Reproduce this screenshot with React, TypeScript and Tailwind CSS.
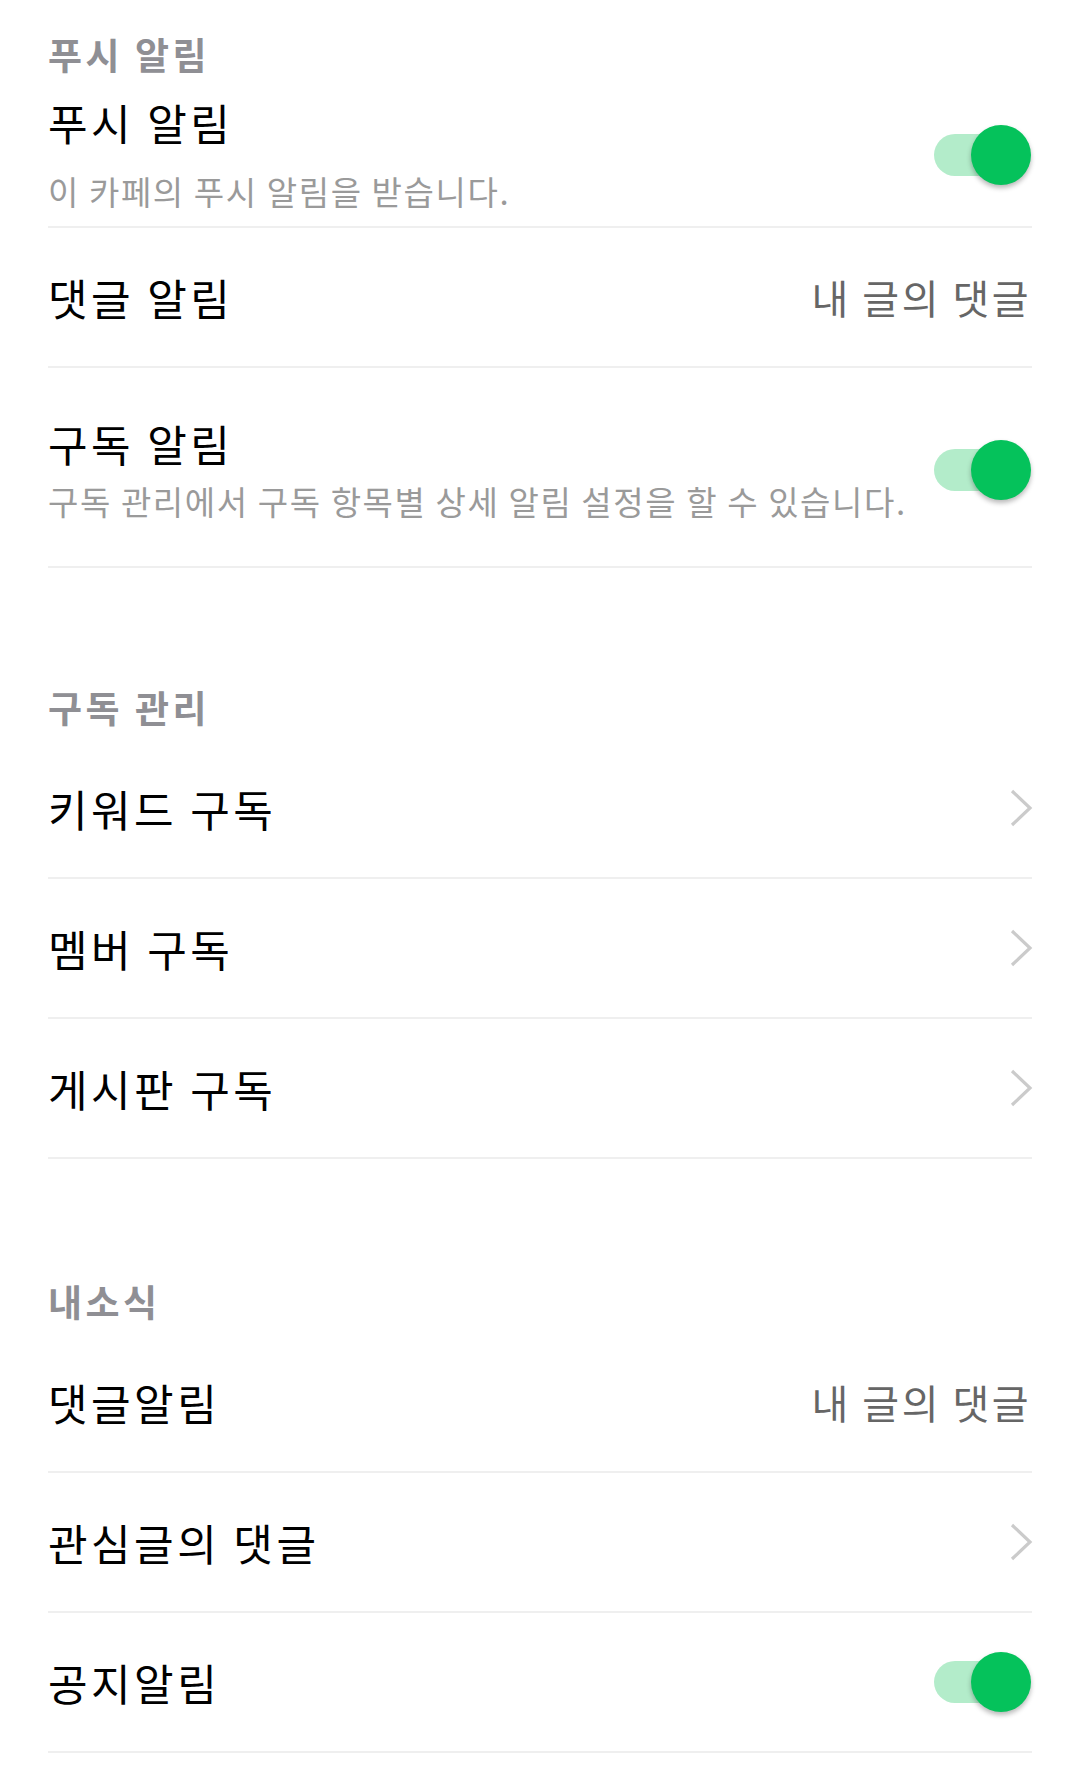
import React from "react";

const font = "font-['Noto_Sans_CJK_KR','Noto_Sans',sans-serif]";

const Toggle = () => (
	<div className="relative h-[60px] w-[98px] shrink-0">
		<div className="absolute left-0 right-[4px] top-[9px] h-[42px] rounded-full bg-[#b3ecca]" />
		<div className="absolute right-[1px] top-0 h-[60px] w-[60px] rounded-full bg-[#05c25b] shadow-[0_3px_5px_rgba(0,0,0,0.28)]" />
	</div>
);

const Chevron = () => (
	<svg width="24" height="38" viewBox="0 0 24 38" className="mr-[-1px] shrink-0">
		<polyline
			points="3,2 21,19 3,36"
			fill="none"
			stroke="#cbcbcb"
			strokeWidth="3.2"
			strokeLinejoin="miter"
		/>
	</svg>
);

const SectionHeader = ({ title }: { title: string }) => (
	<div className="flex h-[64px] items-center">
		<span className="text-[37px] font-bold leading-[48px] tracking-[3.5px] text-[#8f8f94]">{title}</span>
	</div>
);

const Row = ({ title, value, toggle }: { title: string; value?: string; toggle?: boolean }) => (
	<div className="flex h-[140px] items-center justify-between border-b-2 border-[#efefef]">
		<span className="text-[43px] leading-[52px] tracking-[3.5px] text-black">{title}</span>
		{toggle ? (
			<Toggle />
		) : value ? (
			<span className="pr-[1px] text-[40px] leading-[52px] tracking-[2.5px] text-[#666666]">{value}</span>
		) : (
			<Chevron />
		)}
	</div>
);

export default function App() {
	return (
		<div className={`min-h-[1778px] w-full bg-white px-[48px] pt-[22px] ${font}`}>
			{/* 푸시 알림 */}
			<section>
				<SectionHeader title="푸시 알림" />
				<div className="flex items-center justify-between border-b-2 border-[#efefef] pt-[10px] pb-[13px]">
					<div className="flex flex-col">
						<span className="text-[43px] leading-[52px] tracking-[3.5px] text-black">푸시 알림</span>
						<span className="mt-[21px] text-[33px] leading-[44px] tracking-[1.6px] text-[#9a9a9a]">
							이 카페의 푸시 알림을 받습니다.
						</span>
					</div>
					<Toggle />
				</div>
				<Row title="댓글 알림" value="내 글의 댓글" />
				<div className="flex items-center justify-between border-b-2 border-[#efefef] pt-[49px] pb-[43px]">
					<div className="flex min-w-0 flex-col">
						<span className="text-[43px] leading-[52px] tracking-[3.5px] text-black">구독 알림</span>
						<span className="mt-[10px] whitespace-nowrap text-[33px] leading-[44px] tracking-[1.6px] text-[#9a9a9a]">
							구독 관리에서 구독 항목별 상세 알림 설정을 할 수 있습니다.
						</span>
					</div>
					<Toggle />
				</div>
			</section>

			{/* 구독 관리 */}
			<section className="mt-[107px]">
				<SectionHeader title="구독 관리" />
				<Row title="키워드 구독" />
				<Row title="멤버 구독" />
				<Row title="게시판 구독" />
			</section>

			{/* 내소식 */}
			<section className="mt-[110px]">
				<SectionHeader title="내소식" />
				<Row title="댓글알림" value="내 글의 댓글" />
				<Row title="관심글의 댓글" />
				<Row title="공지알림" toggle />
			</section>
		</div>
	);
}
